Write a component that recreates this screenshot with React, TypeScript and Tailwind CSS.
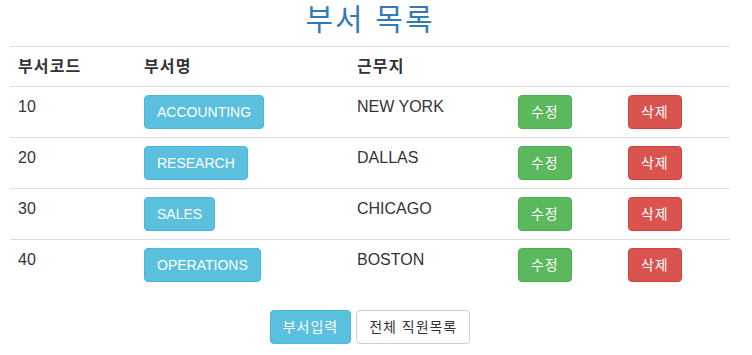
const depts = [
  { code: 10, name: "ACCOUNTING", loc: "NEW YORK" },
  { code: 20, name: "RESEARCH", loc: "DALLAS" },
  { code: 30, name: "SALES", loc: "CHICAGO" },
  { code: 40, name: "OPERATIONS", loc: "BOSTON" },
];

const btn =
  "inline-block h-[34px] px-3 rounded border text-[14px] leading-[20px] whitespace-nowrap";
// hangul glyphs in Noto CJK run a little narrower than the original font
const ko = "tracking-[0.07em]";

export default function App() {
  return (
    <div
      className="w-[752px] h-[355px] bg-white text-[#333] text-[16px]"
      style={{ fontFamily: '"Liberation Sans", "Noto Sans CJK KR", sans-serif' }}
    >
      <div className="w-[720px] ml-[10px]">
        <h2 className={`text-center text-[30px] leading-[33px] text-[#337ab7] pt-[3px] pb-[10px] ${ko}`}>
          부서 목록
        </h2>
        <table className="w-[720px] table-fixed border-collapse">
          <colgroup>
            <col className="w-[126px]" />
            <col className="w-[213px]" />
            <col className="w-[161px]" />
            <col className="w-[110px]" />
            <col className="w-[110px]" />
          </colgroup>
          <thead>
            <tr>
              <th className={`text-left font-bold p-2 leading-[23px] border-t border-b border-[#ddd] ${ko}`}>부서코드</th>
              <th className={`text-left font-bold p-2 leading-[23px] border-t border-b border-[#ddd] ${ko}`}>부서명</th>
              <th className={`text-left font-bold p-2 leading-[23px] border-t border-b border-[#ddd] ${ko}`}>근무지</th>
              <th className="p-2 border-t border-b border-[#ddd]"></th>
              <th className="p-2 border-t border-b border-[#ddd]"></th>
            </tr>
          </thead>
          <tbody>
            {depts.map((d, i) => (
              <tr key={d.code} className={i > 0 ? "border-t border-[#ddd]" : ""}>
                <td className="p-2 align-top leading-[23px]">{d.code}</td>
                <td className="p-2 align-top">
                  <button className={`${btn} bg-[#5bc0de] border-[#46b8da] text-white`}>
                    {d.name}
                  </button>
                </td>
                <td className="p-2 align-top leading-[23px]">{d.loc}</td>
                <td className="p-2 align-top">
                  <button className={`${btn} ${ko} bg-[#5cb85c] border-[#4cae4c] text-white`}>수정</button>
                </td>
                <td className="p-2 align-top">
                  <button className={`${btn} ${ko} bg-[#d9534f] border-[#d43f3a] text-white`}>삭제</button>
                </td>
              </tr>
            ))}
          </tbody>
        </table>
        <div className="flex justify-center gap-[5px] mt-5">
          <button className={`${btn} ${ko} bg-[#5bc0de] border-[#46b8da] text-white`}>부서입력</button>
          <button className={`${btn} ${ko} bg-white border-[#ccc] text-[#333]`}>전체 직원목록</button>
        </div>
      </div>
    </div>
  );
}
